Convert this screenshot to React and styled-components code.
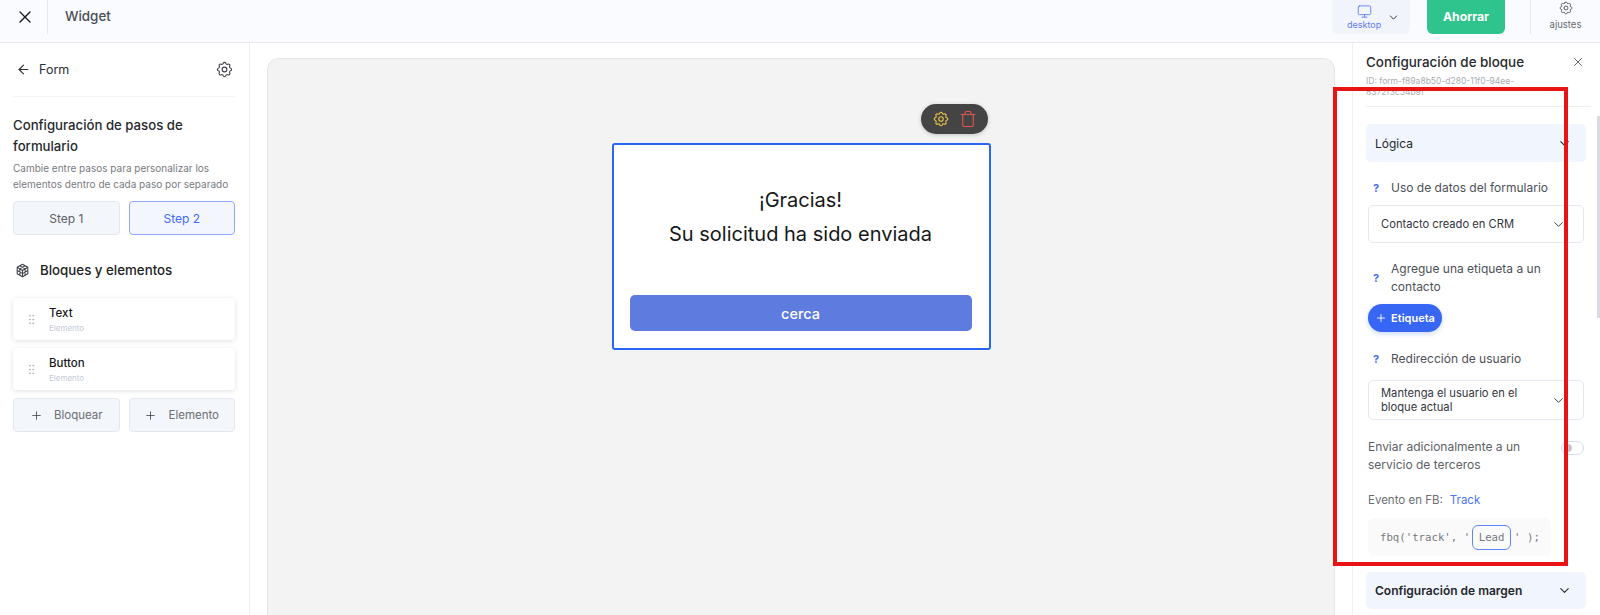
import React from "react";
import styled, { createGlobalStyle } from "styled-components";
import { X, ArrowLeft, Monitor, ChevronDown, Plus, Trash, GripVertical } from "lucide-react";
import { TbSettings } from "react-icons/tb";

const Global = createGlobalStyle`
  html, body { margin: 0; padding: 0; height: 615px; overflow: hidden; background: #fff; }
  body { font-family: Inter, "Liberation Sans", sans-serif; color: #1f2329; }
  * { box-sizing: border-box; }
`;

const Page = styled.div`
  position: relative;
  width: 1600px;
  height: 615px;
  display: flex;
  flex-direction: column;
  overflow: hidden;
`;

const Header = styled.header`
  flex: 0 0 43px;
  display: flex;
  align-items: flex-start;
  background: #fafbff;
  border-bottom: 1px solid #e9eaef;
`;

const CloseBox = styled.div`
  width: 48px;
  height: 34px;
  padding-left: 3px;
  display: flex;
  align-items: center;
  justify-content: center;
  border-right: 1px solid #e6e7ec;
  color: #1c1c1c;
`;

const WidgetName = styled.div`
  margin-left: 17px;
  height: 33px;
  line-height: 33px;
  font-size: 13.4px;
  font-weight: 500;
  color: #4a4d52;
  flex: 1;
`;

const DeviceBox = styled.div`
  width: 78px;
  height: 34px;
  background: #f1f4fb;
  border-radius: 0 0 6px 6px;
  display: flex;
  align-items: center;
  padding-left: 15px;
  gap: 6px;
  color: #2c3038;
`;

const DeviceLabel = styled.div`
  display: flex;
  flex-direction: column;
  align-items: center;
  font-size: 9px;
  color: #5f7cf5;
  line-height: 12px;
  padding-top: 1px;
`;

const SaveButton = styled.div`
  margin-left: 17px;
  width: 78px;
  height: 34px;
  background: #2fc48d;
  border-radius: 0 0 6px 6px;
  color: #fff;
  font-size: 12.2px;
  font-weight: 700;
  display: flex;
  align-items: center;
  justify-content: center;
  padding-bottom: 1px;
`;

const SettingsBox = styled.div`
  margin-left: 25px;
  width: 70px;
  height: 34px;
  border-left: 1px solid #e6e7ec;
  display: flex;
  flex-direction: column;
  align-items: center;
  font-size: 9.5px;
  line-height: 12px;
  color: #666a70;
  gap: 3px;
`;

const Body = styled.div`
  flex: 1;
  display: flex;
  min-height: 0;
`;

const LeftPanel = styled.aside`
  width: 250px;
  flex: none;
  border-right: 1px solid #eeeff3;
  padding: 0 14px 0 13px;
`;

const BackRow = styled.div`
  height: 54px;
  display: flex;
  align-items: center;
  gap: 8px;
  font-size: 12.5px;
  color: #2a2d31;
  border-bottom: 1px solid #f3f4f6;
  padding: 0 1px 0 3px;
`;

const BackTitle = styled.span`
  flex: 1;
`;

const StepTitle = styled.h2`
  margin: 18px 0 0;
  font-size: 13.2px;
  font-weight: 500;
  line-height: 21px;
  color: #27292d;
`;

const StepHint = styled.p`
  margin: 3px 0 0;
  font-size: 10px;
  line-height: 16px;
  color: #777b80;
`;

const ButtonGrid = styled.div`
  display: grid;
  grid-template-columns: 1fr 1fr;
  gap: 9px;
`;

const StepButtons = styled(ButtonGrid)`
  margin-top: 9px;
`;

const GridButton = styled.div`
  height: 34px;
  border-radius: 4px;
  display: flex;
  align-items: center;
  justify-content: center;
  gap: 11px;
  font-size: ${(p) => (p.$small ? 11.5 : 12)}px;
  color: ${(p) => (p.$active ? "#3f6af5" : p.$small ? "#6a6e75" : "#5b5f66")};
  background: ${(p) => (p.$active ? "#f3f6ff" : "#f3f6fa")};
  border: 1px solid ${(p) => (p.$active ? "#90a9fb" : "#e3e7ee")};
`;

const BlocksTitle = styled.div`
  margin: 25px 0 18px;
  padding-left: 2px;
  height: 20px;
  display: flex;
  align-items: center;
  gap: 10px;
  font-size: 13.3px;
  font-weight: 500;
  color: #222;
`;

const ElementCard = styled.div`
  height: 42px;
  margin-bottom: 8px;
  background: #fff;
  border-radius: 4px;
  box-shadow: 0 1px 5px rgba(40, 50, 80, 0.14);
  display: flex;
  align-items: center;
  padding-left: 12px;
  gap: 11px;
  color: #a4a8b8;
`;

const ElementText = styled.div`
  display: flex;
  flex-direction: column;
  gap: 3px;
`;

const ElementName = styled.div`
  font-size: 11.5px;
  font-weight: 500;
  line-height: 14px;
  color: #17191c;
`;

const ElementKind = styled.div`
  font-size: 8px;
  line-height: 10px;
  color: #c4cad8;
`;

const Stage = styled.main`
  flex: 1;
  padding: 15px 17px 0;
  min-width: 0;
`;

const Canvas = styled.div`
  height: 100%;
  padding-top: 84px;
  background: #f3f3f3;
  border: 1px solid #e6e6e6;
  border-bottom: none;
  border-radius: 12px 12px 0 0;
  display: flex;
  justify-content: center;
  align-items: flex-start;
`;

const FormCard = styled.div`
  position: relative;
  width: 379px;
  height: 207px;
  background: #fff;
  border: 2px solid #2a66f6;
  border-radius: 3px;
  padding: 38px 17px 0 16px;
  display: flex;
  flex-direction: column;
  align-items: stretch;
`;

const FloatingTools = styled.div`
  position: absolute;
  top: -41px;
  right: 1px;
  width: 67px;
  height: 30px;
  border-radius: 15px;
  background: #444444;
  box-shadow: 0 1px 4px rgba(0, 0, 0, 0.2);
  display: flex;
  align-items: center;
  justify-content: center;
  gap: 9px;
`;

const ThanksLine = styled.div`
  text-align: center;
  font-size: 20px;
  line-height: 34px;
  color: #16181a;
`;

const CloseFormButton = styled.div`
  margin-top: 44px;
  height: 36px;
  background: #5e7be0;
  border-radius: 5px;
  color: #fff;
  font-size: 14.5px;
  font-weight: 500;
  display: flex;
  align-items: center;
  justify-content: center;
`;

const RightPanel = styled.aside`
  position: relative;
  width: 248px;
  flex: none;
  border-left: 1px solid #eeeff3;
  padding: 0 14px 0 13px;
`;

const Scrollbar = styled.div`
  position: absolute;
  top: 73px;
  right: 0;
  width: 3px;
  height: 202px;
  background: #d8dbe2;
`;

const PanelHead = styled.div`
  height: 64px;
  border-bottom: 1px solid #eeeff3;
  padding-top: 10px;
  margin-right: -5px;
  position: relative;
`;

const PanelTitle = styled.div`
  font-size: 13.4px;
  font-weight: 500;
  line-height: 18px;
  color: #27292d;
`;

const PanelClose = styled.div`
  position: absolute;
  top: 12px;
  right: 6px;
  color: #444;
  display: flex;
`;

const PanelId = styled.div`
  width: 155px;
  margin-top: 5px;
  font-size: 8.5px;
  line-height: 11px;
  color: #a9adb3;
`;

const Accordion = styled.div`
  height: ${(p) => (p.$tall ? 37 : 38)}px;
  background: #f1f5fe;
  border-radius: 5px;
  padding: 0 14px 0 9px;
  display: flex;
  align-items: center;
  justify-content: space-between;
  font-size: 12px;
  font-weight: ${(p) => (p.$bold ? 600 : 400)};
  color: #24272b;
`;

const LogicBlock = styled.div`
  margin-top: 17px;
`;

const Section = styled.div`
  padding: 0 2px;
`;

const HelpRow = styled.div`
  display: flex;
  align-items: center;
  font-size: 12px;
  line-height: 18px;
  color: #4d5056;
  margin-top: ${(p) => p.$top}px;
`;

const HelpMark = styled.span`
  width: 23px;
  flex: none;
  padding-left: 5px;
  font-size: 11px;
  font-weight: 700;
  color: #3f6af5;
`;

const SelectBox = styled.div`
  margin-top: ${(p) => p.$top}px;
  height: ${(p) => p.$height}px;
  border: 1px solid #e5e7f0;
  border-radius: 5px;
  padding: 0 17px 0 12px;
  display: flex;
  align-items: center;
  justify-content: space-between;
  gap: 10px;
  font-size: 11.2px;
  line-height: 14px;
  color: #33363d;
`;

const TagButton = styled.div`
  margin-top: 8px;
  width: 74px;
  height: 28px;
  border-radius: 14px;
  background: #3766f4;
  box-shadow: 0 2px 5px rgba(55, 102, 244, 0.25);
  color: #fff;
  font-size: 11px;
  font-weight: 600;
  display: flex;
  align-items: center;
  justify-content: center;
  gap: 4px;
`;

const ToggleRow = styled.div`
  margin-top: 18px;
  display: flex;
  justify-content: space-between;
  align-items: flex-start;
  font-size: 12px;
  line-height: 18px;
  color: #5c5f65;
`;

const ToggleText = styled.div`
  width: 165px;
`;

const Toggle = styled.div`
  margin-top: 3px;
  width: 23px;
  height: 14px;
  border: 1px solid #d5dbf0;
  border-radius: 7px;
  padding: 2px;
  flex: none;
`;

const ToggleKnob = styled.div`
  width: 8px;
  height: 8px;
  border-radius: 50%;
  background: #bfc4d2;
`;

const EventRow = styled.div`
  margin-top: 17px;
  font-size: 11.5px;
  line-height: 18px;
  color: #6b6e73;
`;

const TrackLink = styled.span`
  margin-left: 7px;
  color: #4a74f5;
`;

const CodeBox = styled.div`
  margin-top: 9px;
  width: 183px;
  height: 38px;
  border-radius: 6px;
  background: #fafafa;
  padding-left: 12px;
  display: flex;
  align-items: center;
  font-family: "DejaVu Sans Mono", "Liberation Mono", monospace;
  font-size: 10.7px;
  color: #77797e;
  white-space: pre;
`;

const LeadField = styled.span`
  width: 39px;
  height: 25px;
  margin: 0 3px 0 2px;
  border: 1px solid #5f86f6;
  border-radius: 6px;
  display: flex;
  align-items: center;
  justify-content: center;
`;

const MarginBlock = styled.div`
  margin-top: 16px;
`;

const RedFrame = styled.div`
  position: absolute;
  left: 1333px;
  top: 87px;
  width: 235px;
  height: 479px;
  border: 4px solid #e81313;
  pointer-events: none;
`;

const CubeIcon = () => (
  <svg width="15" height="15" viewBox="0 0 24 24" fill="none" stroke="#3f434a" strokeWidth="1.7" strokeLinejoin="round">
    <path d="M12 2l8.5 4.8v10.4L12 22l-8.5-4.8V6.8z" />
    <path d="M3.5 6.8L12 12l8.5-5.2M12 12v10" />
    <path d="M7.7 4.4l8.5 5v10.2M16.3 4.4l-8.5 5v10.2M3.5 12l8.5 5 8.5-5" />
  </svg>
);

export default function App() {
  return (
    <Page>
      <Global />
      <Header>
        <CloseBox>
          <X size={20} strokeWidth={1.6} />
        </CloseBox>
        <WidgetName>Widget</WidgetName>
        <DeviceBox>
          <DeviceLabel>
            <Monitor size={15} strokeWidth={1.4} color="#5f7cf5" />
            desktop
          </DeviceLabel>
          <ChevronDown size={13} strokeWidth={1.8} />
        </DeviceBox>
        <SaveButton>Ahorrar</SaveButton>
        <SettingsBox>
          <TbSettings size={16} strokeWidth={1.4} color="#555" />
          ajustes
        </SettingsBox>
      </Header>
      <Body>
        <LeftPanel>
          <BackRow>
            <ArrowLeft size={15} strokeWidth={1.7} />
            <BackTitle>Form</BackTitle>
            <TbSettings size={19} strokeWidth={1.4} color="#3f434a" />
          </BackRow>
          <StepTitle>Configuración de pasos de formulario</StepTitle>
          <StepHint>Cambie entre pasos para personalizar los elementos dentro de cada paso por separado</StepHint>
          <StepButtons>
            <GridButton>Step 1</GridButton>
            <GridButton $active>Step 2</GridButton>
          </StepButtons>
          <BlocksTitle>
            <CubeIcon />
            Bloques y elementos
          </BlocksTitle>
          <ElementCard>
            <GripVertical size={13} strokeWidth={1.2} />
            <ElementText>
              <ElementName>Text</ElementName>
              <ElementKind>Elemento</ElementKind>
            </ElementText>
          </ElementCard>
          <ElementCard>
            <GripVertical size={13} strokeWidth={1.2} />
            <ElementText>
              <ElementName>Button</ElementName>
              <ElementKind>Elemento</ElementKind>
            </ElementText>
          </ElementCard>
          <ButtonGrid>
            <GridButton $small>
              <Plus size={13} strokeWidth={1.5} color="#3f434a" />
              Bloquear
            </GridButton>
            <GridButton $small>
              <Plus size={13} strokeWidth={1.5} color="#3f434a" />
              Elemento
            </GridButton>
          </ButtonGrid>
        </LeftPanel>
        <Stage>
          <Canvas>
            <FormCard>
              <FloatingTools>
                <TbSettings size={18} strokeWidth={1.5} color="#e8c24a" />
                <Trash size={18} strokeWidth={1.5} color="#e4534f" />
              </FloatingTools>
              <ThanksLine>¡Gracias!</ThanksLine>
              <ThanksLine>Su solicitud ha sido enviada</ThanksLine>
              <CloseFormButton>cerca</CloseFormButton>
            </FormCard>
          </Canvas>
        </Stage>
        <RightPanel>
          <Scrollbar />
          <PanelHead>
            <PanelTitle>Configuración de bloque</PanelTitle>
            <PanelClose>
              <X size={14} strokeWidth={1.4} />
            </PanelClose>
            <PanelId>ID: form-f89a8b50-d280-11f0-94ee-8372f3c54b9f</PanelId>
          </PanelHead>
          <LogicBlock>
            <Accordion>
              Lógica
              <ChevronDown size={15} strokeWidth={1.7} />
            </Accordion>
            <Section>
              <HelpRow $top={17}>
                <HelpMark>?</HelpMark>
                Uso de datos del formulario
              </HelpRow>
              <SelectBox $top={8} $height={38}>
                Contacto creado en CRM
                <ChevronDown size={15} strokeWidth={1.5} />
              </SelectBox>
              <HelpRow $top={17}>
                <HelpMark>?</HelpMark>
                <span>Agregue una etiqueta a un contacto</span>
              </HelpRow>
              <TagButton>
                <Plus size={12} strokeWidth={1.8} />
                Etiqueta
              </TagButton>
              <HelpRow $top={18}>
                <HelpMark>?</HelpMark>
                Redirección de usuario
              </HelpRow>
              <SelectBox $top={12} $height={40}>
                <span>Mantenga el usuario en el bloque actual</span>
                <ChevronDown size={15} strokeWidth={1.5} style={{ flex: "none" }} />
              </SelectBox>
              <ToggleRow>
                <ToggleText>Enviar adicionalmente a un servicio de terceros</ToggleText>
                <Toggle>
                  <ToggleKnob />
                </Toggle>
              </ToggleRow>
              <EventRow>
                Evento en FB:
                <TrackLink>Track</TrackLink>
              </EventRow>
              <CodeBox>
                fbq('track', '<LeadField>Lead</LeadField>' );
              </CodeBox>
            </Section>
          </LogicBlock>
          <MarginBlock>
            <Accordion $tall $bold>
              Configuración de margen
              <ChevronDown size={15} strokeWidth={1.7} />
            </Accordion>
          </MarginBlock>
        </RightPanel>
      </Body>
      <RedFrame />
    </Page>
  );
}
